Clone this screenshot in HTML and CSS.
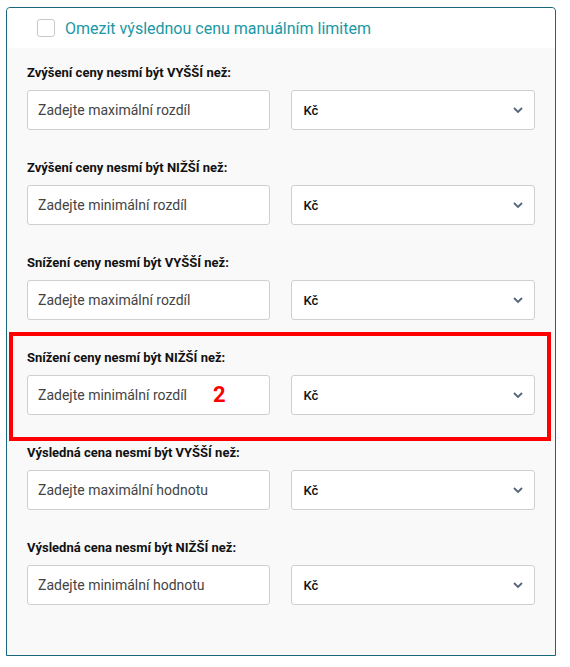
FILE: index.html
```html
<!DOCTYPE html>
<html lang="cs">
<head>
    <meta charset="UTF-8">
    <meta name="viewport" content="width=device-width, initial-scale=1.0">
    <title>Limit ceny</title>
    <link rel="stylesheet" href="styles.css">
</head>
<body>

<div class="card">
    <div class="card-header">
        <label class="check">
            <span class="check-box"></span>
            <span class="check-text">Omezit výslednou cenu manuálním limitem</span>
        </label>
    </div>
    <div class="card-body">
        <div class="row">
            <div class="row-label">Zvýšení ceny nesmí být VYŠŠÍ než:</div>
            <div class="fields">
                <div class="field"><input type="text" placeholder="Zadejte maximální rozdíl"></div>
                <div class="select"><span>Kč</span><svg width="12" height="8" viewBox="0 0 12 8"><path d="M2 2l4 4 4-4" fill="none" stroke="#56657a" stroke-width="1.8"/></svg></div>
            </div>
        </div>
        <div class="row">
            <div class="row-label">Zvýšení ceny nesmí být NIŽŠÍ než:</div>
            <div class="fields">
                <div class="field"><input type="text" placeholder="Zadejte minimální rozdíl"></div>
                <div class="select"><span>Kč</span><svg width="12" height="8" viewBox="0 0 12 8"><path d="M2 2l4 4 4-4" fill="none" stroke="#56657a" stroke-width="1.8"/></svg></div>
            </div>
        </div>
        <div class="row">
            <div class="row-label">Snížení ceny nesmí být VYŠŠÍ než:</div>
            <div class="fields">
                <div class="field"><input type="text" placeholder="Zadejte maximální rozdíl"></div>
                <div class="select"><span>Kč</span><svg width="12" height="8" viewBox="0 0 12 8"><path d="M2 2l4 4 4-4" fill="none" stroke="#56657a" stroke-width="1.8"/></svg></div>
            </div>
        </div>
        <div class="row marked">
            <div class="mark-box"></div>
            <div class="row-label">Snížení ceny nesmí být NIŽŠÍ než:</div>
            <div class="fields">
                <div class="field"><input type="text" placeholder="Zadejte minimální rozdíl"><span class="mark-num">2</span></div>
                <div class="select"><span>Kč</span><svg width="12" height="8" viewBox="0 0 12 8"><path d="M2 2l4 4 4-4" fill="none" stroke="#56657a" stroke-width="1.8"/></svg></div>
            </div>
        </div>
        <div class="row">
            <div class="row-label">Výsledná cena nesmí být VYŠŠÍ než:</div>
            <div class="fields">
                <div class="field"><input type="text" placeholder="Zadejte maximální hodnotu"></div>
                <div class="select"><span>Kč</span><svg width="12" height="8" viewBox="0 0 12 8"><path d="M2 2l4 4 4-4" fill="none" stroke="#56657a" stroke-width="1.8"/></svg></div>
            </div>
        </div>
        <div class="row">
            <div class="row-label">Výsledná cena nesmí být NIŽŠÍ než:</div>
            <div class="fields">
                <div class="field"><input type="text" placeholder="Zadejte minimální hodnotu"></div>
                <div class="select"><span>Kč</span><svg width="12" height="8" viewBox="0 0 12 8"><path d="M2 2l4 4 4-4" fill="none" stroke="#56657a" stroke-width="1.8"/></svg></div>
            </div>
        </div>
    </div>
</div>

</body>
</html>
```

FILE: styles.css
```css
body {
    margin: 0;
    padding: 7px 0 0 6px;
    font-family: Roboto, "Liberation Sans", sans-serif;
    background-color: #fff;
}
.card {
    width: 548px;
    border: 1px solid #17687a;
    border-radius: 4px 4px 0 0;
    background-color: #f9f9f9;
}
.card-header {
    height: 40px;
    background-color: #fff;
    border-radius: 4px 4px 0 0;
    display: flex;
    align-items: center;
    padding-left: 30px;
}
.check {
    display: flex;
    align-items: center;
    gap: 10px;
}
.check-box {
    width: 16px;
    height: 16px;
    border: 1px solid #c8c8c8;
    border-radius: 3px;
    background-color: #fff;
}
.check-text {
    color: #1a98a6;
    font-size: 16px;
}
.card-body {
    padding: 16px 20px 21px 20px;
}
.row {
    position: relative;
    margin-bottom: 29px;
}
.row-label {
    font-size: 13px;
    font-weight: bold;
    line-height: 18px;
    color: #111;
    margin-bottom: 8px;
}
.fields {
    display: flex;
    gap: 21px;
}
.field {
    position: relative;
    width: 244px;
}
.field input {
    box-sizing: border-box;
    width: 100%;
    height: 40px;
    border: 1px solid #cfcfcf;
    border-radius: 3px;
    padding: 0 10px;
    font-family: Roboto, "Liberation Sans", sans-serif;
    font-size: 14px;
    background-color: #fff;
}
.field input::placeholder {
    color: #444;
}
.select {
    box-sizing: border-box;
    width: 244px;
    height: 40px;
    border: 1px solid #cfcfcf;
    border-radius: 3px;
    background-color: #fff;
    display: flex;
    align-items: center;
    justify-content: space-between;
    padding: 0 10px 0 11px;
    font-size: 13px;
    font-weight: 500;
    color: #111;
}
.mark-box {
    position: absolute;
    left: -18px;
    right: -16px;
    top: -17px;
    bottom: -26px;
    border: 4px solid #f00;
}
.mark-num {
    position: absolute;
    left: 186px;
    top: 7px;
    color: #f00;
    font-size: 22px;
    font-weight: bold;
}
```
